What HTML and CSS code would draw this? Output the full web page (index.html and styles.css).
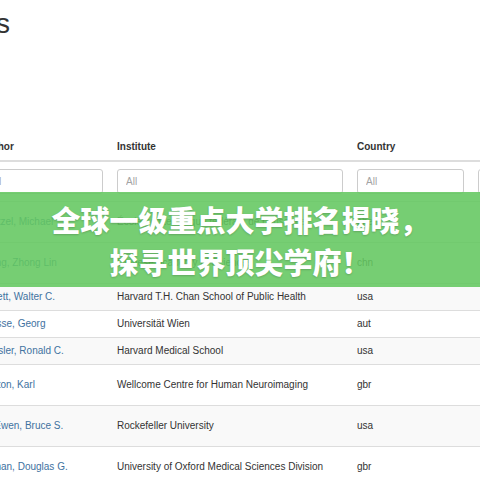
FILE: index.html
```html
<!DOCTYPE html>
<html lang="en">
<head>
<meta charset="utf-8">
<title>Highly Cited Researchers</title>
<link rel="stylesheet" href="styles.css">
</head>
<body>
<div class="page">
  <h1 class="title">Highly Cited Researchers</h1>
  <table class="grid">
    <colgroup>
      <col class="c-author"><col class="c-inst"><col class="c-country"><col class="c-field">
    </colgroup>
    <thead>
      <tr class="head">
        <th>Author</th><th>Institute</th><th>Country</th><th class="extra">Category</th>
      </tr>
      <tr class="filters">
        <td><input class="filter" placeholder="All"></td>
        <td><input class="filter" placeholder="All"></td>
        <td><input class="filter" placeholder="All"></td>
        <td><input class="filter" placeholder="All"></td>
      </tr>
    </thead>
    <tbody>
      <tr class="odd"><td><a class="author" href="#">Grätzel, Michael</a></td><td>École polytechnique fédérale de Lausanne</td><td>che</td><td class="extra">Chemistry<br>Materials Science</td></tr>
      <tr><td><a class="author" href="#">Wang, Zhong Lin</a></td><td>Chinese Academy of Sciences</td><td>chn</td><td class="extra">Materials Science<br>Physics</td></tr>
      <tr class="odd"><td><a class="author" href="#">Willett, Walter C.</a></td><td>Harvard T.H. Chan School of Public Health</td><td>usa</td><td class="extra">Clinical Medicine</td></tr>
      <tr><td><a class="author" href="#">Kresse, Georg</a></td><td>Universität Wien</td><td>aut</td><td class="extra">Physics</td></tr>
      <tr class="odd"><td><a class="author" href="#">Kessler, Ronald C.</a></td><td>Harvard Medical School</td><td>usa</td><td class="extra">Psychiatry</td></tr>
      <tr><td><a class="author" href="#">Friston, Karl</a></td><td>Wellcome Centre for Human Neuroimaging</td><td>gbr</td><td class="extra">Neuroscience<br>Psychiatry</td></tr>
      <tr class="odd"><td><a class="author" href="#">McEwen, Bruce S.</a></td><td>Rockefeller University</td><td>usa</td><td class="extra">Neuroscience<br>Psychiatry</td></tr>
      <tr><td><a class="author" href="#">Altman, Douglas G.</a></td><td>University of Oxford Medical Sciences Division</td><td>gbr</td><td class="extra">Clinical Medicine<br>Social Sciences</td></tr>
    </tbody>
  </table>
  <div class="banner">
    <p class="banner-line">全球一级重点大学排名揭晓，</p>
    <p class="banner-line">探寻世界顶尖学府！</p>
  </div>
</div>
</body>
</html>
```

FILE: styles.css
```css
html, body {
  margin: 0;
  padding: 0;
  background: #fff;
}

.page {
  position: relative;
  width: 480px;
  height: 480px;
  overflow: hidden;
  font-family: "Liberation Sans", Arial, sans-serif;
  color: #333;
}

.title {
  margin: 8px 0 0 -390px;
  width: 400px;
  text-align: right;
  font-size: 28px;
  line-height: 32px;
  font-weight: 400;
  color: #333;
  white-space: nowrap;
}

.grid {
  margin: 94px 0 0 -26px;
  border-collapse: collapse;
  table-layout: fixed;
  width: 697px;
  font-size: 10px;
  line-height: 14px;
}

.c-author { width: 136px; }
.c-inst { width: 240px; }
.c-country { width: 121px; }
.c-field { width: 200px; }

.grid th {
  text-align: left;
  font-weight: 700;
  padding: 6px 7px;
  border-bottom: 2px solid #ddd;
  vertical-align: bottom;
}

.grid td {
  padding: 6px 7px;
  border-top: 1px solid #ddd;
  vertical-align: middle;
  white-space: nowrap;
  overflow: hidden;
}

.grid .extra {
  padding-left: 14px;
}

.filters td {
  padding: 7px 7px;
  border-top: 0;
}

.filter {
  display: block;
  box-sizing: border-box;
  width: 100%;
  height: 25px;
  margin: 0;
  padding: 0 8px;
  border: 1px solid #ccc;
  border-radius: 3px;
  font-family: "Liberation Sans", Arial, sans-serif;
  font-size: 10px;
  color: #555;
  background: #fff;
}

.filter::placeholder {
  color: #a3a3a3;
}

.odd td {
  background: #f9f9f9;
}

.author {
  color: #41729f;
  text-decoration: none;
}

.banner {
  position: absolute;
  left: 0;
  right: 0;
  top: 192px;
  height: 95px;
  box-sizing: border-box;
  padding-top: 6px;
  background: rgba(99, 199, 96, 0.88);
  text-align: center;
}

.banner-line {
  margin: 0;
  font-family: "Noto Sans CJK SC", "Noto Sans", sans-serif;
  font-weight: 900;
  font-size: 29px;
  line-height: 42px;
  color: #fff;
  white-space: nowrap;
  text-shadow: 0 1px 2px rgba(0, 0, 0, 0.18);
}
```
